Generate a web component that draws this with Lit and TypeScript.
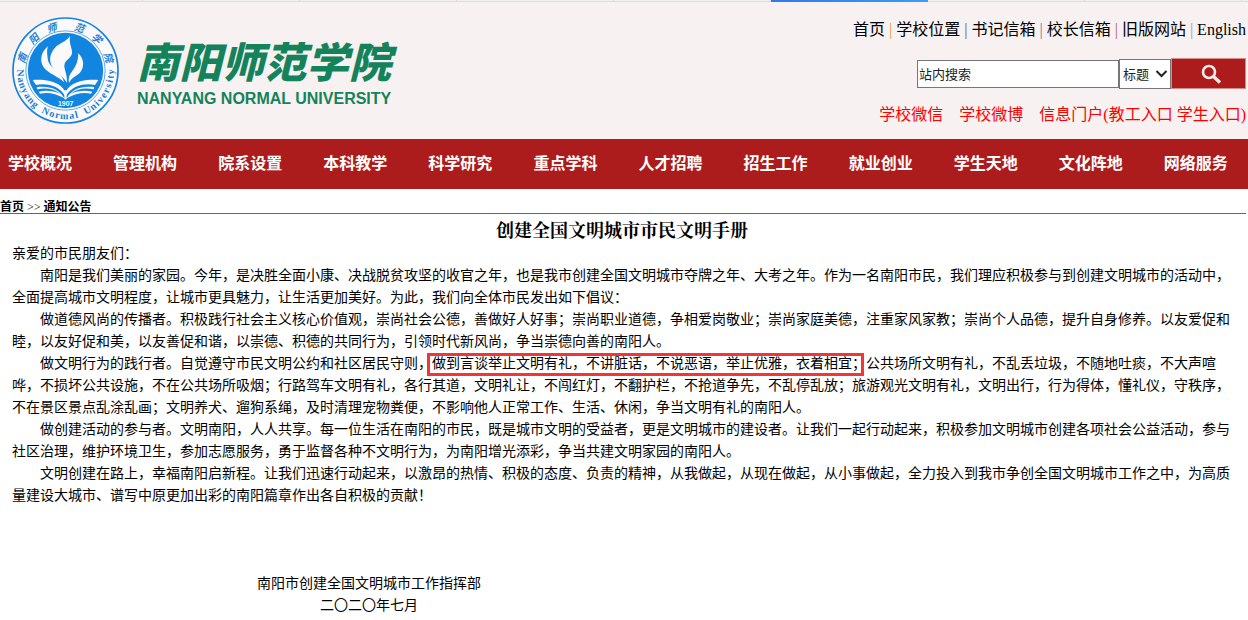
import { LitElement, html, css, svg } from "lit";
import { customElement } from "lit/decorators.js";

const SEAL_TOP: [string, number][] = [
  ["南", -74], ["阳", -45], ["师", -18], ["范", 18], ["学", 44], ["院", 73],
];

const LETTER_ADVANCE: Record<string, number> = { N: 1.4, U: 1.4, m: 1.5, i: 0.7, r: 0.9, l: 0.7, t: 0.8, s: 0.9 };

function sealLetters(text: string, from: number, to: number) {
  const advances = [...text].map((c) => LETTER_ADVANCE[c] ?? 1);
  const total = advances.reduce((a, b) => a + b, 0);
  let used = 0;
  return [...text].map((char, i) => {
    const at = used + advances[i] / 2;
    used += advances[i];
    return { char, angle: from + ((to - from) * at) / total };
  });
}

@customElement("school-seal")
class SchoolSeal extends LitElement {
  static styles = css`
    :host { display: block; width: 107px; flex: none; }
    .seal { display: block; width: 100%; height: auto; }
    .cn { font: italic 700 30px "Noto Sans CJK SC", sans-serif; fill: #1b7fd6; text-anchor: middle; }
    .en { font: 700 30px "Liberation Serif", serif; fill: #1b7fd6; text-anchor: middle; }
    .year { font: 700 21px "Liberation Sans", sans-serif; fill: #f2f8fd; text-anchor: middle; }
  `;
  render() {
    return html`<svg class="seal" viewBox="36 51 321 321" role="img" aria-label="南阳师范学院校徽">
      <circle cx="196.5" cy="211.5" r="157.5" fill="#fbf9fa" stroke="#1583df" stroke-width="5" />
      <circle cx="196.5" cy="211.5" r="119" fill="none" stroke="#1583df" stroke-width="2" />
      <circle cx="196.5" cy="211.5" r="113" fill="#1285e0" />
      ${SEAL_TOP.map(([c, a]) => svg`<text class="cn" x="196.5" y="88" transform="rotate(${a} 196.5 211.5)">${c}</text>`)}
      ${sealLetters("Nanyang Normal University", 92, -92).map(
        (l) => svg`<text class="en" x="196.5" y="357" transform="rotate(${l.angle} 196.5 211.5)">${l.char}</text>`
      )}
      <g fill="#fbf9fa">
        <path d="M210 107C207 129 214 139 216 153C219 174 193 179 193 197C193 211 202 220 201 249C191 231 170 219 158 202C144 182 150 158 169 139C184 126 202 123 210 107Z" />
        <path d="M144 139C139 152 142 163 143 175C146 207 187 213 192 247C177 229 148 223 132 203C115 181 126 153 144 139Z" />
        <path d="M235 160C253 177 254 203 239 219C226 231 214 233 207 249C204 235 208 224 217 213C229 198 235 181 235 160Z" />
        <path d="M98 240C135 238 180 243 195 275L195 288C177 255 136 249 108 255Z" />
        <path d="M295 240C258 238 213 243 198 275L198 288C216 255 257 249 285 255Z" />
        <path d="M111 261C149 257 178 267 193 295C166 279 141 276 120 281L116 275C140 270 163 273 181 282C163 266 137 263 111 268Z" />
        <path d="M282 261C244 257 215 267 200 295C227 279 252 276 273 281L277 275C253 270 230 273 212 282C230 266 256 263 282 268Z" />
        <path d="M193 270L200 270L200 298L193 298Z" />
      </g>
      <text class="year" x="197" y="317">1907</text>
    </svg>`;
  }
}

@customElement("site-header")
class SiteHeader extends LitElement {
  static styles = css`
    :host { display: block; background: #f7f1f1; }
    .tabs { display: flex; height: 1px; background: #f2f0f0; border-bottom: 1px solid #dddcdc; }
    .tab { flex: 0 1 157px; box-sizing: border-box; border-right: 1px solid #dddcdc; }
    .tab.first { flex-basis: 143px; }
    .tab.active { height: 2px; border: 0; background: linear-gradient(90deg, #3079ee, #3c9cf8); }
    .top { display: flex; justify-content: space-between; padding: 15px 2px 12px 12px; }
    .brand { display: flex; gap: 18px; }
    .name { width: 254px; padding-top: 13px; color: #14835b; white-space: nowrap; }
    .cn { display: flex; justify-content: space-between; font: italic 900 42px/60px "Noto Sans CJK SC", sans-serif; }
    .en { font: 700 16px/18px "Liberation Sans", sans-serif; }
    .tools { display: flex; flex-direction: column; align-items: flex-end; padding-top: 1px; font: 16px/24px "Liberation Serif", "Noto Sans CJK SC", serif; white-space: nowrap; }
    a { color: inherit; text-decoration: none; }
    .bar1 { color: #e29b3f; } .bar2 { color: #5a50b4; } .bar3 { color: #5b7fa0; } .bar4 { color: #c0605a; } .bar5 { color: #6fa8d0; }
    .search { display: flex; align-items: center; margin: 16px 0 14px; height: 31px; }
    .query, .field { box-sizing: border-box; margin: 0; border: 1px solid #767676; border-radius: 0; background: #fff; color: #222; font: 13px "Noto Sans CJK SC", sans-serif; }
    .query { width: 202px; height: 28px; padding: 0 1px; }
    .picker { position: relative; }
    .field { display: block; width: 52px; height: 30px; padding: 0 0 0 3px; appearance: none; }
    .arrow { position: absolute; right: 3px; top: 10px; width: 13px; height: 10px; pointer-events: none; }
    .go { display: grid; place-items: center; width: 75px; height: 31px; margin: 0; padding: 0 0 0 4px; border: 1px solid #d98a8a; background: #ad1c1c; }
    .lens { width: 22px; height: 22px; }
    .entry { display: flex; gap: 16px; color: #f00; }
  `;
  render() {
    const links = ["首页", "学校位置", "书记信箱", "校长信箱", "旧版网站", "English"];
    return html`
      <div class="tabs">
        <span class="tab first"></span><span class="tab"></span><span class="tab"></span><span class="tab"></span>
        <span class="tab"></span><span class="tab active"></span><span class="tab"></span><span class="tab"></span>
      </div>
      <div class="top">
        <div class="brand">
          <school-seal></school-seal>
          <div class="name">
            <div class="cn">${[..."南阳师范学院"].map((c) => html`<span>${c}</span>`)}</div>
            <div class="en">NANYANG NORMAL UNIVERSITY</div>
          </div>
        </div>
        <div class="tools">
          <div>${links.map((l, i) => html`${i ? html` <span class="bar${i}">|</span> ` : ""}<a href="#">${l}</a>`)}</div>
          <form class="search">
            <input class="query" type="text" aria-label="站内搜索" .value=${"站内搜索"} />
            <div class="picker">
              <select class="field" aria-label="搜索范围"><option>标题</option></select>
              <svg class="arrow" viewBox="0 0 13 10"><path d="M1.5 2L6.5 7L11.5 2" fill="none" stroke="#222" stroke-width="2" /></svg>
            </div>
            <button class="go" type="button" aria-label="搜索">
              <svg class="lens" viewBox="0 0 22 22"><circle cx="9" cy="9" r="6" fill="none" stroke="#f7eaea" stroke-width="2.6" /><path d="M13.5 13.5L20 19.5" stroke="#f7eaea" stroke-width="3.4" /></svg>
            </button>
          </form>
          <div class="entry">
            <a href="#">学校微信</a><a href="#">学校微博</a><span><a href="#">信息门户</a>(<a href="#">教工入口</a> <a href="#">学生入口</a>)</span>
          </div>
        </div>
      </div>`;
  }
}

@customElement("site-nav")
class SiteNav extends LitElement {
  static styles = css`
    :host { display: block; background: #ad1c1c; }
    .nav { display: flex; justify-content: space-between; padding: 0 20px 4px 8px; }
    .item { color: #fff; text-decoration: none; white-space: nowrap; font: 700 16px/46px "Noto Sans CJK SC", sans-serif; }
  `;
  render() {
    const items = ["学校概况", "管理机构", "院系设置", "本科教学", "科学研究", "重点学科", "人才招聘", "招生工作", "就业创业", "学生天地", "文化阵地", "网络服务"];
    return html`<nav class="nav">${items.map((t) => html`<a class="item" href="#">${t}</a>`)}</nav>`;
  }
}

@customElement("app-root")
class AppRoot extends LitElement {
  static styles = css`
    :host { display: block; background: #fff; color: #000; }
    .crumbs { margin: 12px 2px 0 0; border-bottom: 1px solid #666; font: 700 12px/12px "Liberation Serif", "Noto Sans CJK SC", serif; }
    .crumbs a { color: inherit; text-decoration: none; }
    .sep { font-weight: 400; }
    .article { padding: 3px 12px 0; font: 14px/22px "Noto Sans CJK SC", sans-serif; text-spacing-trim: space-all; }
    .title { margin: 0 4px 0 0; text-align: center; font: 700 18px/24px "Noto Serif CJK SC", "Noto Sans CJK SC", serif; }
    p { margin: 0; text-indent: 2em; }
    .greeting { text-indent: 0; }
    .marked { position: relative; }
    .marked::after { content: ""; position: absolute; inset: 1px 2px -4px -5px; border: 3px solid #f23637; }
    .signature { width: fit-content; margin: 66px 0 0 245px; text-align: center; }
    .signature p { text-indent: 0; }
  `;
  render() {
    return html`
      <site-header></site-header>
      <site-nav></site-nav>
      <div class="crumbs"><a href="#">首页</a> <span class="sep">&gt;&gt;</span> <a href="#">通知公告</a></div>
      <article class="article">
        <h1 class="title">创建全国文明城市市民文明手册</h1>
        <p class="greeting">亲爱的市民朋友们：</p>
        <p>南阳是我们美丽的家园。今年，是决胜全面小康、决战脱贫攻坚的收官之年，也是我市创建全国文明城市夺牌之年、大考之年。作为一名南阳市民，我们理应积极参与到创建文明城市的活动中，全面提高城市文明程度，让城市更具魅力，让生活更加美好。为此，我们向全体市民发出如下倡议：</p>
        <p>做道德风尚的传播者。积极践行社会主义核心价值观，崇尚社会公德，善做好人好事；崇尚职业道德，争相爱岗敬业；崇尚家庭美德，注重家风家教；崇尚个人品德，提升自身修养。以友爱促和睦，以友好促和美，以友善促和谐，以崇德、积德的共同行为，引领时代新风尚，争当崇德向善的南阳人。</p>
        <p>做文明行为的践行者。自觉遵守市民文明公约和社区居民守则，<span class="marked">做到言谈举止文明有礼，不讲脏话，不说恶语，举止优雅，衣着相宜；</span>公共场所文明有礼，不乱丢垃圾，不随地吐痰，不大声喧哗，不损坏公共设施，不在公共场所吸烟；行路驾车文明有礼，各行其道，文明礼让，不闯红灯，不翻护栏，不抢道争先，不乱停乱放；旅游观光文明有礼，文明出行，行为得体，懂礼仪，守秩序，不在景区景点乱涂乱画；文明养犬、遛狗系绳，及时清理宠物粪便，不影响他人正常工作、生活、休闲，争当文明有礼的南阳人。</p>
        <p>做创建活动的参与者。文明南阳，人人共享。每一位生活在南阳的市民，既是城市文明的受益者，更是文明城市的建设者。让我们一起行动起来，积极参加文明城市创建各项社会公益活动，参与社区治理，维护环境卫生，参加志愿服务，勇于监督各种不文明行为，为南阳增光添彩，争当共建文明家园的南阳人。</p>
        <p>文明创建在路上，幸福南阳启新程。让我们迅速行动起来，以激昂的热情、积极的态度、负责的精神，从我做起，从现在做起，从小事做起，全力投入到我市争创全国文明城市工作之中，为高质量建设大城市、谱写中原更加出彩的南阳篇章作出各自积极的贡献！</p>
        <div class="signature">
          <p>南阳市创建全国文明城市工作指挥部</p>
          <p>二〇二〇年七月</p>
        </div>
      </article>`;
  }
}
